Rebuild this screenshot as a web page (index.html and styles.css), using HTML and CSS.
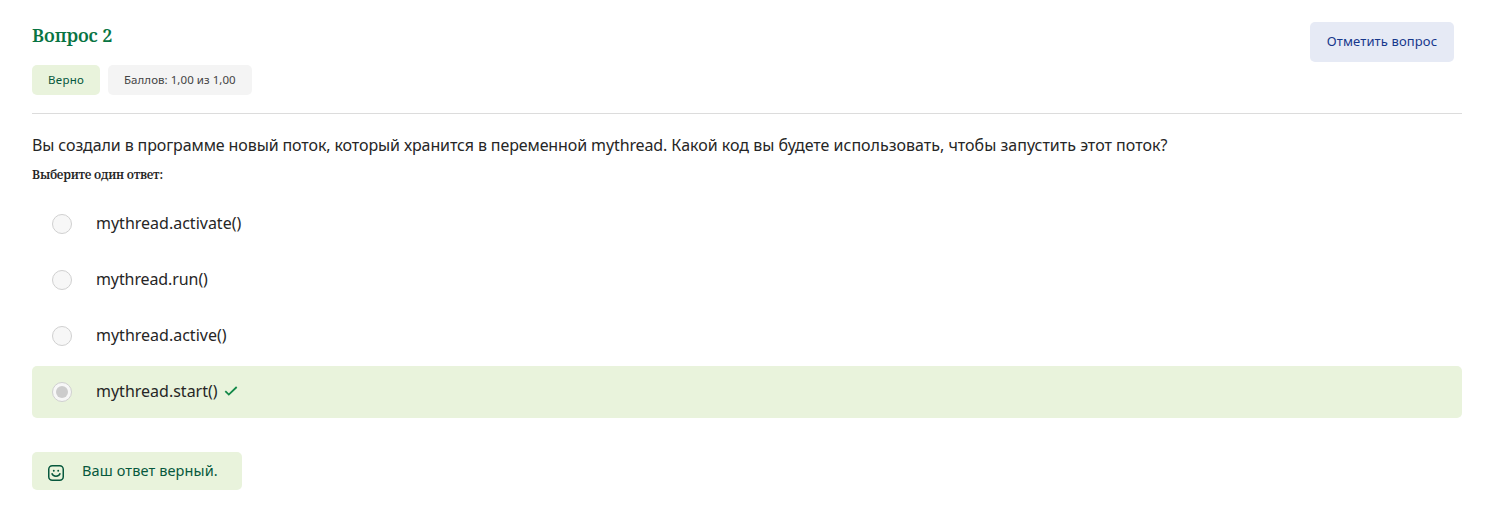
FILE: index.html
```html
<!DOCTYPE html>
<html lang="ru">
<head>
<meta charset="utf-8">
<title>Вопрос 2</title>
<link rel="stylesheet" href="styles.css">
</head>
<body>
<main class="question">
  <header class="head">
    <div class="info">
      <h3 class="title"><span>Вопрос 2</span></h3>
      <div class="tags">
        <div class="tag tag-correct"><span>Верно</span></div>
        <div class="tag tag-grade"><span>Баллов: 1,00 из 1,00</span></div>
      </div>
    </div>
    <button class="flag" type="button"><span>Отметить вопрос</span></button>
  </header>
  <p class="text"><span class="intro">Вы создали в программе новый поток, который хранится в переменной mythread. </span>Какой код вы будете использовать, чтобы запустить этот поток?</p>
  <p class="prompt"><span>Выберите один ответ:</span></p>
  <div class="answers">
    <div class="answer"><i class="radio"></i><span class="label">mythread.activate()</span></div>
    <div class="answer"><i class="radio"></i><span class="label label-run">mythread.run()</span></div>
    <div class="answer"><i class="radio"></i><span class="label">mythread.active()</span></div>
    <div class="answer correct"><i class="radio checked"></i><span class="label">mythread.start()</span>
      <svg class="check" width="14" height="10" viewBox="0 0 14 10"><path d="M1.3 5.2 4.8 8.6 12.7 1"/></svg></div>
  </div>
  <div class="feedback">
    <svg class="smile" width="16" height="16" viewBox="0 0 16 16"><rect x=".75" y=".75" width="14.5" height="14.5" rx="3.5"/><path d="M3.8 8.3C5 12.2 11 12.2 12.2 8.3"/><circle cx="5.8" cy="5.8" r=".95"/><circle cx="10.2" cy="5.8" r=".95"/></svg>
    <span class="verdict">Ваш ответ верный.</span>
  </div>
</main>
</body>
</html>
```

FILE: styles.css
```css
* { box-sizing: border-box; margin: 0; padding: 0; }
body { background: #fff; color: #262626; font: 16px/24px "Noto Sans", "Open Sans", sans-serif; }
.question { padding: 22px 46px 0 32px; white-space: nowrap; }
.head { display: flex; justify-content: space-between; align-items: flex-start; height: 92px; padding-right: 8px; border-bottom: 1px solid #dcdcdc; }
.title { font: 600 18px/26px "Noto Serif", "DejaVu Serif", serif; letter-spacing: -.12px; color: #087443; }
.tags { display: flex; gap: 8px; margin-top: 17px; }
.tag { height: 30px; border-radius: 5px; padding: 0 16px; font-size: 11.5px; line-height: 30px; }
.tag-correct { width: 68px; background: #e9f3dc; color: #07583d; letter-spacing: .3px; }
.tag-grade { width: 144px; background: #f4f4f4; color: #444; letter-spacing: .05px; }
.flag { width: 144px; height: 40px; padding-bottom: 2px; border: 0; border-radius: 5px; background: #e6eaf5; color: #16388c; font: 13px/38px "Noto Sans", sans-serif; letter-spacing: .12px; }
.text { margin-top: 19px; }
.intro { letter-spacing: -.11px; }
.prompt { margin-top: 8px; font: 600 12px/20px "Noto Serif", "DejaVu Serif", serif; letter-spacing: -.25px; }
.answers { display: grid; gap: 4px; margin-top: 13px; }
.answer { display: flex; align-items: center; height: 52px; padding-left: 20px; border-radius: 5px; }
.correct { background: #e9f3dc; }
.label { padding-bottom: 2px; }
.label-run { letter-spacing: -.1px; }
.radio { width: 20px; height: 20px; margin-right: 24px; border: 1px solid #d0d0d0; border-radius: 50%; background: #f7f7f7; }
.checked { display: grid; place-items: center; }
.checked::before { content: ""; width: 12px; height: 12px; border-radius: 50%; background: #ccc; }
.check { margin: 0 0 2px 6px; fill: none; stroke: #128848; stroke-width: 1.8; }
.feedback { display: flex; align-items: center; width: 210px; height: 38px; margin-top: 34px; padding-left: 16px; border-radius: 5px; background: #e9f3dc; color: #07583d; font-size: 14.5px; letter-spacing: .12px; }
.verdict { padding-bottom: 2px; }
.smile { margin: 4px 18px 0 0; fill: none; stroke: #07583d; stroke-width: 1.5; }
.smile circle { fill: #07583d; stroke: none; }
```
